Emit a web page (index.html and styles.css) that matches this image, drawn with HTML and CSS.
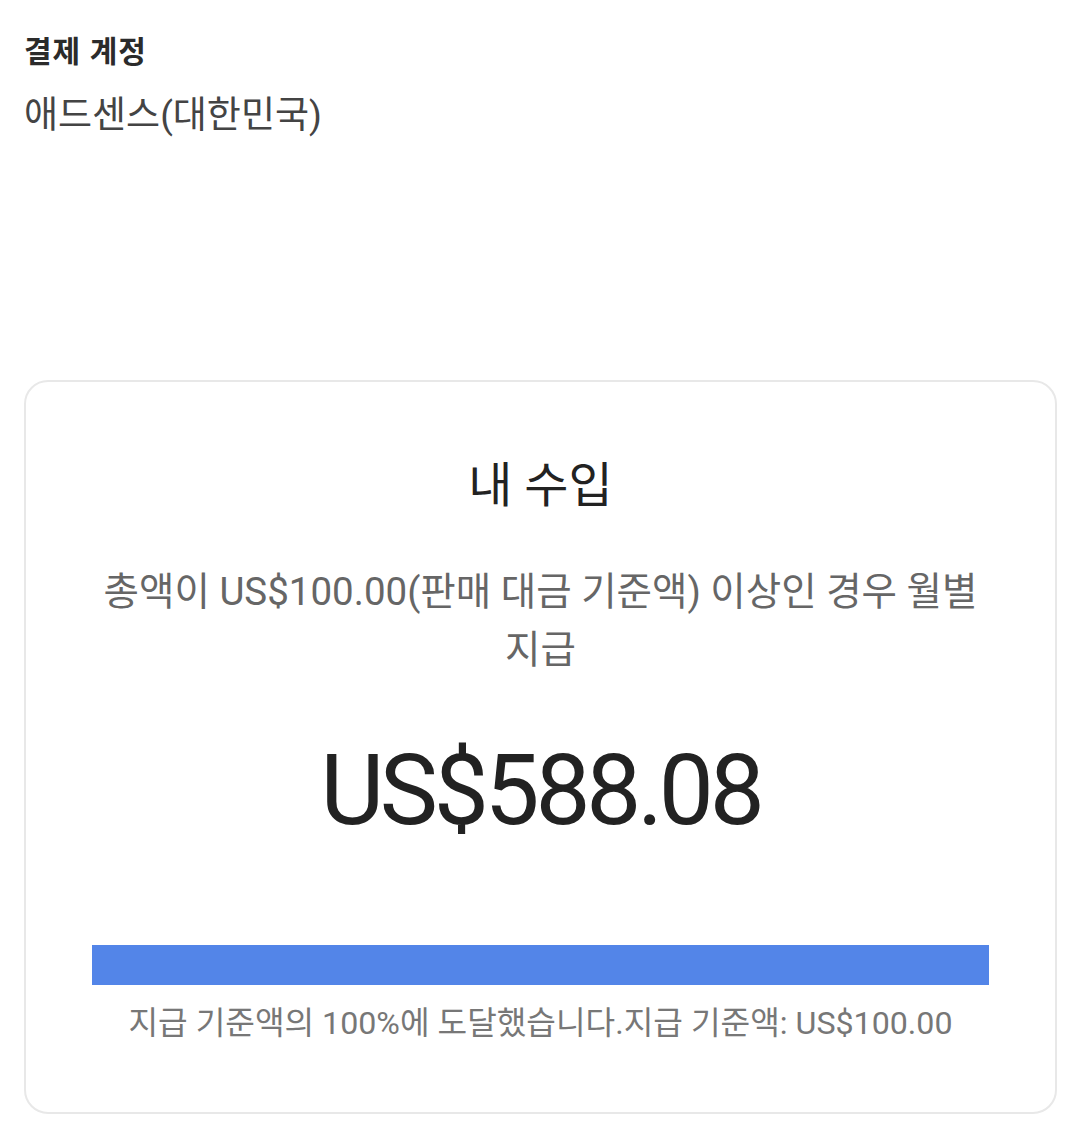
FILE: index.html
```html
<!DOCTYPE html>
<html lang="ko">
<head>
<meta charset="utf-8">
<title>결제 계정</title>
<link rel="stylesheet" href="styles.css">
</head>
<body>
<main class="page">
  <section class="account">
    <div class="account-label">결제 계정</div>
    <div class="account-value">애드센스(대한민국)</div>
  </section>
  <section class="card">
    <h1 class="card-title">내 수입</h1>
    <p class="card-desc">총액이 US$100.00(판매 대금 기준액) 이상인 경우 월별 지급</p>
    <div class="amount">US$588.08</div>
    <div class="progress"><div class="progress-fill" style="width:100%"></div></div>
    <p class="progress-note">지급 기준액의 100%에 도달했습니다.지급 기준액: US$100.00</p>
  </section>
</main>
</body>
</html>
```

FILE: styles.css
```css
* { box-sizing: border-box; }
html, body { margin: 0; padding: 0; background: #fff; }
body {
  font-family: "Roboto", "Noto Sans CJK KR", sans-serif;
  width: 1080px;
  height: 1121px;
  overflow: hidden;
}
.page {
  padding: 32px 23px 0 24px;
}
.account {
  display: flex;
  flex-direction: column;
  gap: 20px;
}
.account-label {
  font-size: 30px;
  line-height: 40px;
  font-weight: 700;
  letter-spacing: 1px;
  color: #2b2b2b;
}
.account-value {
  font-size: 37px;
  line-height: 48px;
  color: #444;
}
.card {
  margin-top: 240px;
  border: 2px solid #e8e8e8;
  border-radius: 24px;
  padding: 74px 66px 67px;
  display: flex;
  flex-direction: column;
  align-items: center;
  text-align: center;
}
.card-title {
  margin: 0;
  font-size: 48px;
  line-height: 60px;
  font-weight: 400;
  color: #222;
}
.card-desc {
  margin: 47px 0 0;
  font-size: 38.5px;
  line-height: 58px;
  color: #666;
}
.amount {
  margin-top: 52px;
  font-size: 98px;
  line-height: 120px;
  letter-spacing: -4.2px;
  color: #222;
}
.progress {
  margin-top: 94px;
  width: 100%;
  height: 40px;
  background: #e6e6e6;
}
.progress-fill {
  height: 100%;
  background: #5385e8;
}
.progress-note {
  margin: 16px 0 0;
  font-size: 32.2px;
  line-height: 44px;
  color: #777;
}
```
